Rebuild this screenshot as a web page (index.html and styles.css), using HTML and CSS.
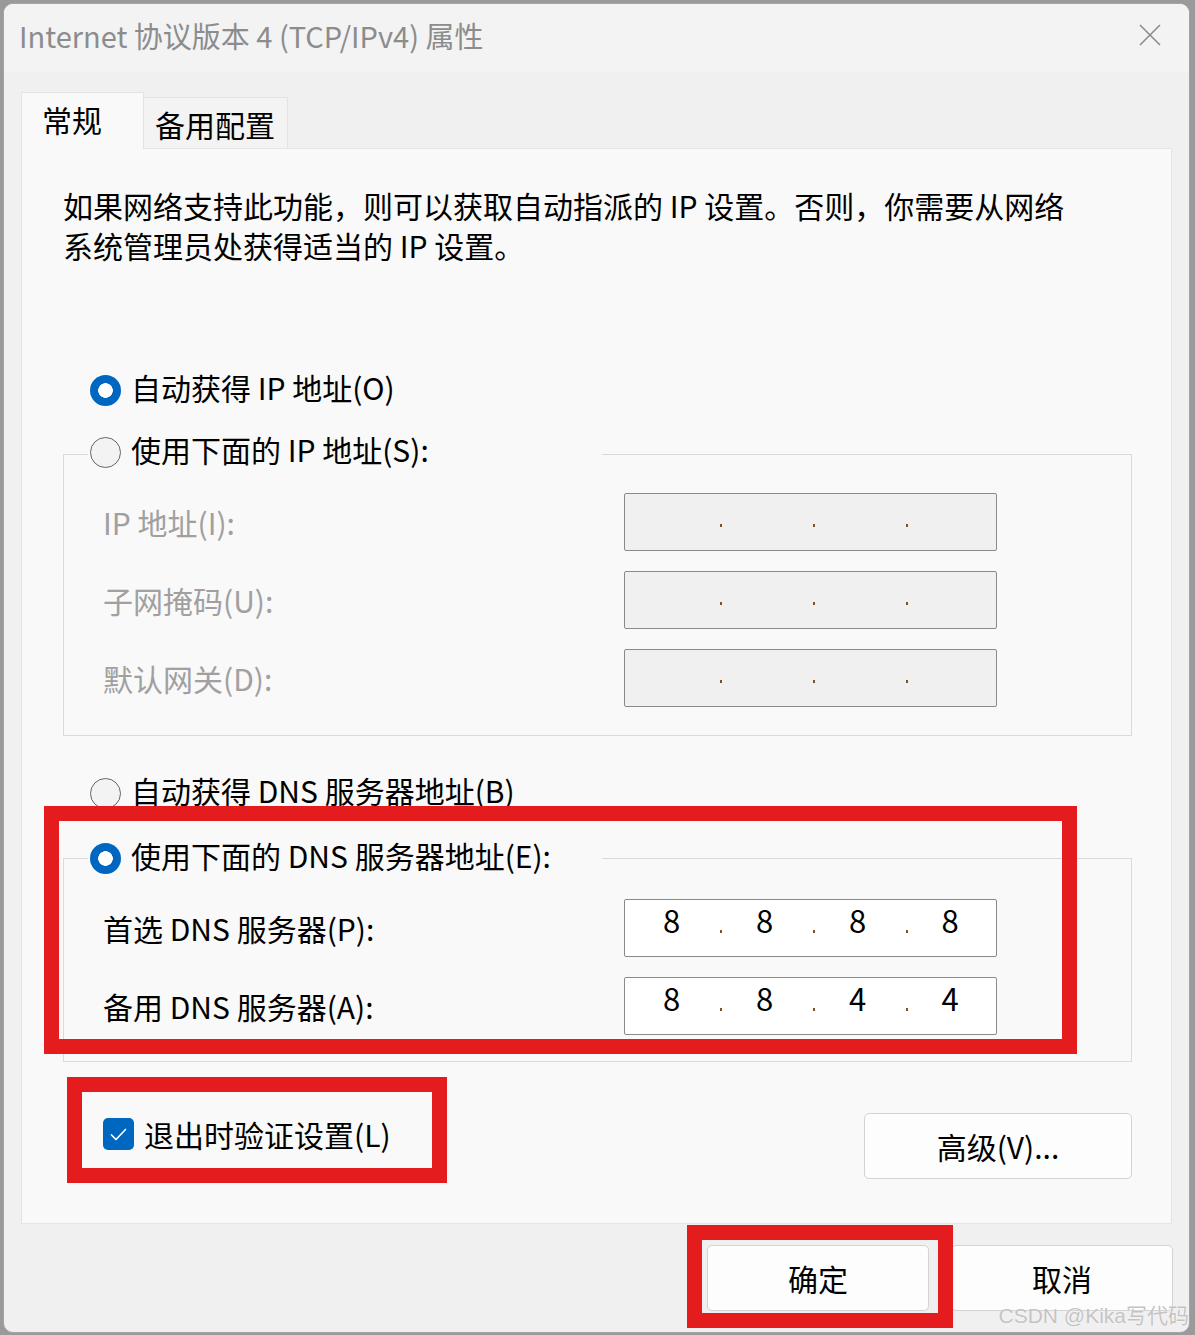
FILE: index.html
```html
<!DOCTYPE html>
<html lang="zh-CN">
<head>
  <meta charset="UTF-8" />
  <title>Internet 协议版本 4 (TCP/IPv4) 属性</title>
  <link rel="stylesheet" href="styles.css">
</head>
<body>

  <div class="window">
    <!-- Title bar -->
    <div class="titlebar">
      <span class="title">Internet 协议版本 4 (TCP/IPv4) 属性</span>
      <svg class="close" width="22" height="22" viewBox="0 0 22 22">
        <path d="M1 1 L21 21 M21 1 L1 21" stroke="#8c8c8c" stroke-width="1.6" fill="none" />
      </svg>
    </div>

    <div class="content">
      <div class="tabs">
        <div class="tab active">常规</div>
        <div class="tab">备用配置</div>
      </div>

      <div class="panel">
        <p class="desc">如果网络支持此功能，则可以获取自动指派的 IP 设置。否则，你需要从网络<br>系统管理员处获得适当的 IP 设置。</p>

        <label class="radio-row first"><span class="radio checked"></span>自动获得 IP 地址(O)</label>

        <fieldset class="group">
          <legend><span class="radio"></span>使用下面的 IP 地址(S):</legend>
          <div class="field disabled">
            <span class="label">IP 地址(I):</span>
            <div class="ip"><span class="seg"></span><span class="seg"></span><span class="seg"></span><span class="seg"></span></div>
          </div>
          <div class="field disabled">
            <span class="label">子网掩码(U):</span>
            <div class="ip"><span class="seg"></span><span class="seg"></span><span class="seg"></span><span class="seg"></span></div>
          </div>
          <div class="field disabled">
            <span class="label">默认网关(D):</span>
            <div class="ip"><span class="seg"></span><span class="seg"></span><span class="seg"></span><span class="seg"></span></div>
          </div>
        </fieldset>

        <label class="radio-row second"><span class="radio"></span>自动获得 DNS 服务器地址(B)</label>

        <fieldset class="group dns">
          <legend><span class="radio checked"></span>使用下面的 DNS 服务器地址(E):</legend>
          <div class="field">
            <span class="label">首选 DNS 服务器(P):</span>
            <div class="ip"><span class="seg">8</span><span class="seg">8</span><span class="seg">8</span><span class="seg">8</span></div>
          </div>
          <div class="field">
            <span class="label">备用 DNS 服务器(A):</span>
            <div class="ip"><span class="seg">8</span><span class="seg">8</span><span class="seg">4</span><span class="seg">4</span></div>
          </div>
        </fieldset>

        <div class="panel-bottom">
          <label class="check-row">
            <span class="checkbox">
              <svg width="31" height="32" viewBox="0 0 31 32">
                <path d="M8.5 17 L13 21.5 L22.5 11.5" stroke="#fff" stroke-width="1.7" fill="none" stroke-linecap="round" stroke-linejoin="round" />
              </svg>
            </span>
            退出时验证设置(L)
          </label>
          <button class="btn btn-adv">高级(V)...</button>
        </div>

        <!-- red annotation boxes -->
        <div class="mark mark-dns"></div>
        <div class="mark mark-check"></div>
      </div>

      <div class="footer">
        <button class="btn">确定</button>
        <button class="btn">取消</button>
      </div>
    </div>

    <div class="mark mark-ok"></div>
    <div class="watermark">CSDN @Kika写代码</div>
  </div>

</body>
</html>
```

FILE: styles.css
```css
body {
  margin: 0;
  background: #9a9a9a;
  overflow: hidden;
  font-family: "Noto Sans CJK SC", "Noto Sans", sans-serif;
  color: #000;
}

.window {
  position: relative;
  box-sizing: border-box;
  width: 1187px;
  height: 1330px;
  margin: 3px 0 0 3px;
  background: #f0f0f0;
  border: 1px solid #a3a3a3;
  border-radius: 10px;
  overflow: hidden;
}

.titlebar {
  box-sizing: border-box;
  height: 68px;
  background: #f3f3f3;
  display: flex;
  align-items: center;
  justify-content: space-between;
  padding: 0 28px 6px 15px;
}

.title {
  font-size: 29px;
  color: #8c8c8c;
}

.content {
  padding: 20px 17px 0;
}

/* Tabs */
.tabs {
  display: flex;
  align-items: flex-end;
  margin-bottom: -1px;
}

.tab {
  box-sizing: border-box;
  font-size: 30px;
  line-height: 30px;
  padding-top: 11px;
}

.tab.active {
  position: relative;
  z-index: 1;
  width: 123px;
  height: 57px;
  padding-left: 20px;
  background: #f9f9f9;
  border: 1px solid #e3e3e3;
  border-bottom: none;
}

.tab:not(.active) {
  width: 144px;
  height: 52px;
  padding-left: 11px;
  background: #f3f3f3;
  border-top: 1px solid #e3e3e3;
  border-right: 1px solid #e3e3e3;
}

/* Panel */
.panel {
  position: relative;
  box-sizing: border-box;
  width: 1151px;
  height: 1076px;
  padding: 37px 39px 0 41px;
  background: #f9f9f9;
  border: 1px solid #e5e5e5;
}

.desc {
  margin: 0;
  font-size: 30px;
  line-height: 39.5px;
}

.radio-row {
  display: flex;
  align-items: flex-start;
  height: 40px;
  margin-left: 27px;
  font-size: 30px;
  line-height: 40px;
}

.radio-row.first { margin-top: 102px; }
.radio-row.second { margin-top: 34px; }

.radio {
  box-sizing: border-box;
  flex: none;
  width: 31px;
  height: 31px;
  margin: 8px 10px 0 0;
  border-radius: 50%;
  border: 1px solid #666;
  background: #f3f3f3;
}

.radio.checked {
  border: none;
  background: radial-gradient(circle, #fff 0 7px, #0067c0 7.6px);
}

/* Group boxes */
.group {
  margin: 22px 0 0;
  min-width: 0;
  padding: 14px 0 28px 39px;
  border: 1px solid #dadada;
}

.group.dns {
  margin-top: 23px;
  padding-top: 16px;
  padding-bottom: 26px;
}

.group legend {
  box-sizing: border-box;
  display: flex;
  align-items: flex-start;
  width: 514px;
  height: 50px;
  margin-left: -15px;
  padding: 0 0 0 2px;
  font-size: 30px;
  line-height: 40px;
}

.group.dns legend { padding-top: 2px; }

.field {
  display: flex;
  align-items: center;
  height: 58px;
}

.field + .field { margin-top: 20px; }

.label {
  width: 521px;
  font-size: 30px;
}

.field.disabled .label { color: #a0a0a0; }

.ip {
  box-sizing: border-box;
  width: 373px;
  height: 58px;
  display: grid;
  grid-template-columns: 93px 93px 93px 92px;
  background: #fff;
  border: 1px solid #8a8a8a;
  border-radius: 2px;
}

.field.disabled .ip { background: #f0f0f0; }

.seg {
  font-size: 31px;
  line-height: 40px;
  text-align: center;
}

.seg + .seg {
  background: linear-gradient(#7b5420, #7b5420) 2px 30px / 2px 3px no-repeat;
}

/* Bottom of panel */
.panel-bottom {
  display: flex;
  justify-content: space-between;
  align-items: flex-start;
  height: 66px;
  margin-top: 51px;
}

.check-row {
  display: flex;
  align-items: center;
  height: 42px;
  margin-left: 40px;
  font-size: 30px;
}

.checkbox {
  display: flex;
  width: 31px;
  height: 32px;
  margin-right: 10px;
  background: #0067c0;
  border-radius: 5px;
}

.btn {
  box-sizing: border-box;
  width: 222px;
  height: 66px;
  padding: 0;
  font-family: inherit;
  font-size: 30px;
  color: #000;
  background: #fdfdfd;
  border: 1px solid #d3d3d3;
  border-radius: 5px;
}

.btn-adv { width: 268px; }

.footer {
  display: flex;
  justify-content: flex-end;
  gap: 22px;
  margin-top: 21px;
  margin-right: -1px;
}

/* Red annotation frames */
.mark {
  position: absolute;
  box-sizing: border-box;
  border: 15px solid #e51c1e;
  z-index: 2;
}

.mark-dns { left: 22px; top: 657px; width: 1033px; height: 248px; }
.mark-check { left: 45px; top: 928px; width: 380px; height: 106px; }
.mark-ok { left: 683px; top: 1221px; width: 266px; height: 103px; }

.watermark {
  position: absolute;
  right: 0;
  bottom: 3px;
  z-index: 3;
  font-family: "Liberation Sans", "Noto Sans CJK SC", sans-serif;
  font-size: 21px;
  line-height: 26px;
  color: rgba(170, 170, 170, 0.7);
  text-shadow: 0 0 1px #fff;
}
```
